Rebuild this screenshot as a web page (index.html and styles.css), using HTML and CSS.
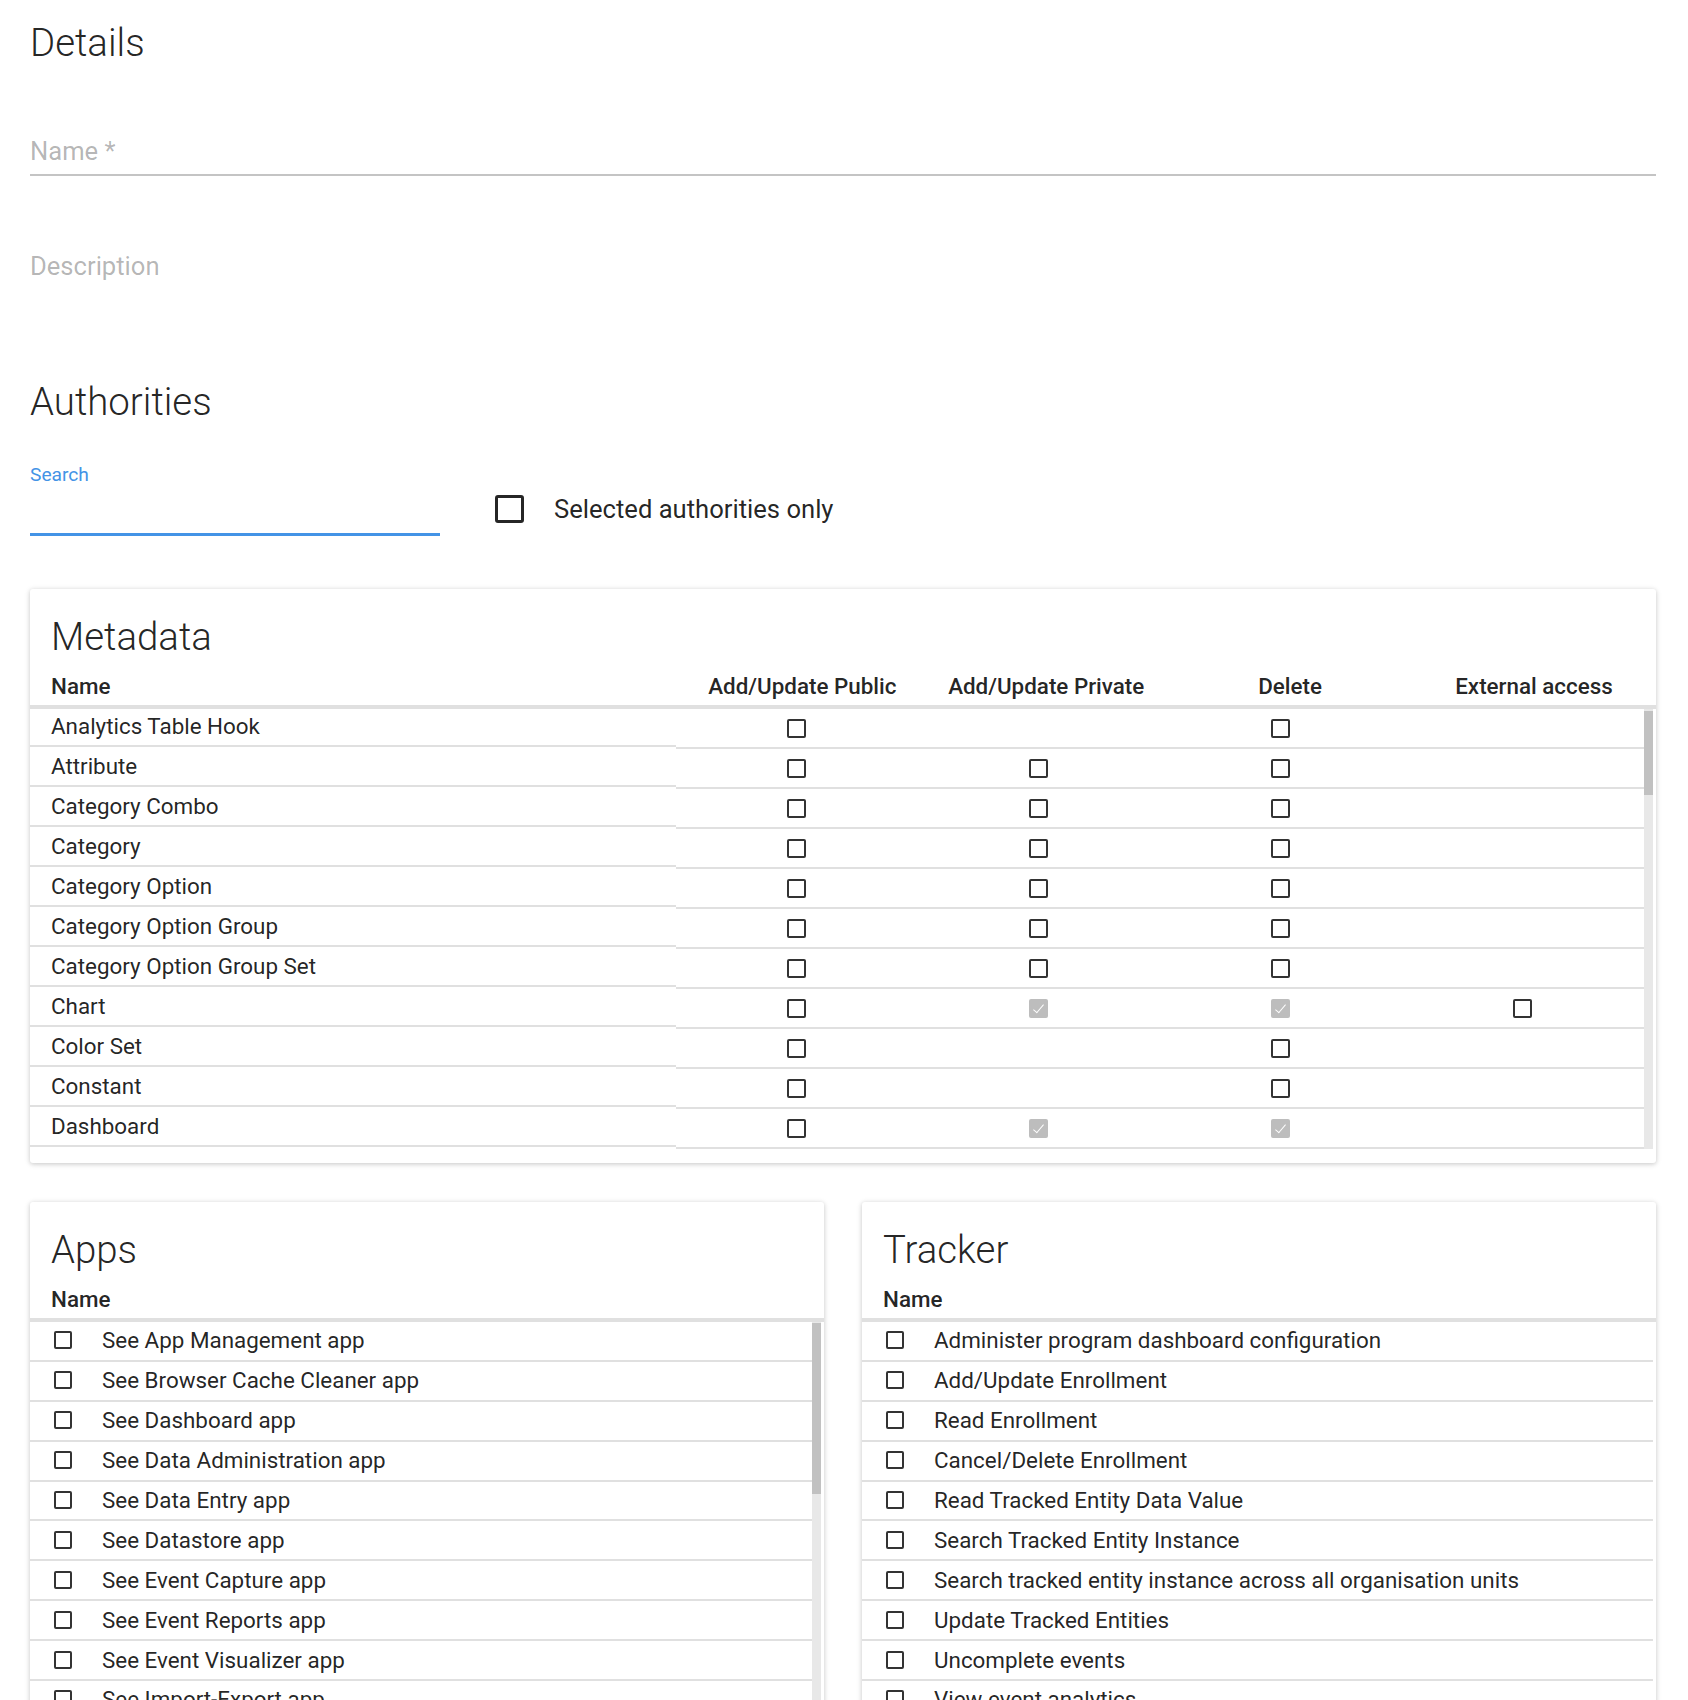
FILE: index.html
```html
<!DOCTYPE html>
<html lang="en">
<head>
<meta charset="utf-8">
<title>User role</title>
<link rel="stylesheet" href="styles.css">
</head>
<body>
<div class="page">
  <h1 class="section-title">Details</h1>
  <div class="field field-name">Name *</div>
  <div class="field field-desc">Description</div>

  <h1 class="section-title auth-title">Authorities</h1>
  <div class="search-row">
    <div class="search-field"><div class="search-label">Search</div></div>
    <label class="sel-only"><span class="big-cb"></span><span class="sel-label">Selected authorities only</span></label>
  </div>

  <section class="card card-meta">
    <h2 class="card-title">Metadata</h2>
    <div class="thead">
      <div class="c-name">Name</div>
      <div class="c-col">Add/Update Public</div>
      <div class="c-col">Add/Update Private</div>
      <div class="c-col">Delete</div>
      <div class="c-col">External access</div>
    </div>
    <div class="scroll-wrap">
      <div class="tbody">
        <div class="trow"><div class="c-name">Analytics Table Hook</div><div class="c-col"><span class="cb"></span></div><div class="c-col"></div><div class="c-col"><span class="cb"></span></div><div class="c-col"></div></div>
        <div class="trow"><div class="c-name">Attribute</div><div class="c-col"><span class="cb"></span></div><div class="c-col"><span class="cb"></span></div><div class="c-col"><span class="cb"></span></div><div class="c-col"></div></div>
        <div class="trow"><div class="c-name">Category Combo</div><div class="c-col"><span class="cb"></span></div><div class="c-col"><span class="cb"></span></div><div class="c-col"><span class="cb"></span></div><div class="c-col"></div></div>
        <div class="trow"><div class="c-name">Category</div><div class="c-col"><span class="cb"></span></div><div class="c-col"><span class="cb"></span></div><div class="c-col"><span class="cb"></span></div><div class="c-col"></div></div>
        <div class="trow"><div class="c-name">Category Option</div><div class="c-col"><span class="cb"></span></div><div class="c-col"><span class="cb"></span></div><div class="c-col"><span class="cb"></span></div><div class="c-col"></div></div>
        <div class="trow"><div class="c-name">Category Option Group</div><div class="c-col"><span class="cb"></span></div><div class="c-col"><span class="cb"></span></div><div class="c-col"><span class="cb"></span></div><div class="c-col"></div></div>
        <div class="trow"><div class="c-name">Category Option Group Set</div><div class="c-col"><span class="cb"></span></div><div class="c-col"><span class="cb"></span></div><div class="c-col"><span class="cb"></span></div><div class="c-col"></div></div>
        <div class="trow"><div class="c-name">Chart</div><div class="c-col"><span class="cb"></span></div><div class="c-col"><span class="cb cb-dis"></span></div><div class="c-col"><span class="cb cb-dis"></span></div><div class="c-col"><span class="cb"></span></div></div>
        <div class="trow"><div class="c-name">Color Set</div><div class="c-col"><span class="cb"></span></div><div class="c-col"></div><div class="c-col"><span class="cb"></span></div><div class="c-col"></div></div>
        <div class="trow"><div class="c-name">Constant</div><div class="c-col"><span class="cb"></span></div><div class="c-col"></div><div class="c-col"><span class="cb"></span></div><div class="c-col"></div></div>
        <div class="trow"><div class="c-name">Dashboard</div><div class="c-col"><span class="cb"></span></div><div class="c-col"><span class="cb cb-dis"></span></div><div class="c-col"><span class="cb cb-dis"></span></div><div class="c-col"></div></div>
      </div>
      <div class="vscroll" aria-hidden="true"><div class="vthumb vthumb-meta"></div></div>
    </div>
  </section>

  <div class="cards-row">
    <section class="card">
      <h2 class="card-title">Apps</h2>
      <div class="thead"><div class="c-name">Name</div></div>
      <div class="scroll-wrap">
        <div class="list">
          <div class="lrow"><span class="cb cb-sm"></span>See App Management app</div>
          <div class="lrow"><span class="cb cb-sm"></span>See Browser Cache Cleaner app</div>
          <div class="lrow"><span class="cb cb-sm"></span>See Dashboard app</div>
          <div class="lrow"><span class="cb cb-sm"></span>See Data Administration app</div>
          <div class="lrow"><span class="cb cb-sm"></span>See Data Entry app</div>
          <div class="lrow"><span class="cb cb-sm"></span>See Datastore app</div>
          <div class="lrow"><span class="cb cb-sm"></span>See Event Capture app</div>
          <div class="lrow"><span class="cb cb-sm"></span>See Event Reports app</div>
          <div class="lrow"><span class="cb cb-sm"></span>See Event Visualizer app</div>
          <div class="lrow"><span class="cb cb-sm"></span>See Import-Export app</div>
        </div>
        <div class="vscroll" aria-hidden="true"><div class="vthumb vthumb-apps"></div></div>
      </div>
    </section>
    <section class="card">
      <h2 class="card-title">Tracker</h2>
      <div class="thead"><div class="c-name">Name</div></div>
      <div class="scroll-wrap">
        <div class="list">
          <div class="lrow"><span class="cb cb-sm"></span>Administer program dashboard configuration</div>
          <div class="lrow"><span class="cb cb-sm"></span>Add/Update Enrollment</div>
          <div class="lrow"><span class="cb cb-sm"></span>Read Enrollment</div>
          <div class="lrow"><span class="cb cb-sm"></span>Cancel/Delete Enrollment</div>
          <div class="lrow"><span class="cb cb-sm"></span>Read Tracked Entity Data Value</div>
          <div class="lrow"><span class="cb cb-sm"></span>Search Tracked Entity Instance</div>
          <div class="lrow"><span class="cb cb-sm"></span>Search tracked entity instance across all organisation units</div>
          <div class="lrow"><span class="cb cb-sm"></span>Update Tracked Entities</div>
          <div class="lrow"><span class="cb cb-sm"></span>Uncomplete events</div>
          <div class="lrow"><span class="cb cb-sm"></span>View event analytics</div>
        </div>
      </div>
    </section>
  </div>
</div>
</body>
</html>
```
FILE: styles.css
```css
html, body {
  margin: 0;
  overflow: hidden;
}
body {
  font-family: Roboto, "Noto Sans", "Liberation Sans", sans-serif;
  color: rgba(0, 0, 0, 0.87);
  background: #fff;
}
.page {
  padding: 20px 32px 0 30px;
}
.section-title {
  margin: 0;
  font-size: 38.4px;
  font-weight: 300;
  line-height: 46px;
}
.field {
  font-size: 25.6px;
  line-height: 30px;
  color: rgba(0, 0, 0, 0.3);
}
.field-name {
  margin-top: 70px;
  padding-bottom: 8px;
  border-bottom: 2px solid #c4c4c4;
}
.field-desc {
  margin-top: 75px;
}
.auth-title {
  margin-top: 98px;
}
.search-row {
  display: flex;
  align-items: flex-start;
  margin-top: 39px;
}
.search-field {
  width: 410px;
  height: 69px;
  border-bottom: 3px solid #4393e6;
}
.search-label {
  font-size: 19.2px;
  line-height: 22px;
  color: #4393e6;
}
.sel-only {
  display: flex;
  align-items: center;
  margin-left: 55px;
  margin-top: 30px;
  height: 30px;
}
.big-cb {
  width: 29px;
  height: 28px;
  box-sizing: border-box;
  border: 3px solid #262626;
  border-radius: 3px;
}
.sel-label {
  margin-left: 30px;
  font-size: 25.6px;
  line-height: 30px;
}
.card {
  background: #fff;
  border-radius: 3px;
  box-shadow: 0 1px 6px rgba(0, 0, 0, 0.12), 0 1px 4px rgba(0, 0, 0, 0.12);
}
.card-meta {
  margin-top: 53px;
  padding-bottom: 14px;
}
.card-title {
  margin: 0;
  padding: 25px 21px 0;
  font-size: 38.4px;
  font-weight: 300;
  line-height: 45px;
}
.thead {
  display: flex;
  padding: 14px 0 6px;
  border-bottom: 4px solid #e0e0e0;
  font-size: 22.4px;
  font-weight: 500;
  line-height: 26px;
}
.c-name {
  width: 40%;
  box-sizing: border-box;
  padding-left: 21px;
}
.c-col {
  width: 15%;
  text-align: center;
}
.scroll-wrap {
  display: flex;
  height: 440px;
  margin-right: 3px;
}
.tbody,
.list {
  flex: 1;
  min-width: 0;
  overflow: hidden;
}
.trow {
  display: flex;
  align-items: flex-start;
  font-size: 22.4px;
}
.trow .c-name {
  height: 38px;
  padding-bottom: 2px;
  display: flex;
  align-items: center;
  border-bottom: 2px solid #e0e0e0;
}
.trow .c-col {
  height: 40px;
  box-sizing: border-box;
  display: flex;
  align-items: center;
  justify-content: center;
  border-bottom: 2px solid #e0e0e0;
}
.cb {
  display: inline-block;
  position: relative;
  width: 19px;
  height: 19px;
  box-sizing: border-box;
  border: 2px solid #333;
  border-radius: 2px;
  flex: none;
}
.cb-dis {
  background: #bdbdbd;
  border-color: #bdbdbd;
}
.cb-dis::after {
  content: "";
  position: absolute;
  left: 5px;
  top: 1px;
  width: 4px;
  height: 10px;
  border: solid #fff;
  border-width: 0 1.5px 1.5px 0;
  transform: rotate(40deg);
}
.vscroll {
  width: 9px;
  flex: none;
  background: #e8e8e8;
}
.vthumb {
  background: #c1c1c1;
}
.vthumb-meta {
  margin-top: 2px;
  height: 84px;
}
.vthumb-apps {
  margin-top: 1px;
  height: 171px;
}
.cards-row {
  display: grid;
  grid-template-columns: 1fr 1fr;
  column-gap: 38px;
  margin-top: 39px;
  align-items: start;
}
.lrow {
  display: flex;
  align-items: center;
  height: 39.9px;
  box-sizing: border-box;
  padding-left: 24px;
  padding-bottom: 1px;
  border-bottom: 2px solid #e0e0e0;
  font-size: 22.4px;
  white-space: nowrap;
}
.cb-sm {
  width: 18px;
  height: 18px;
  margin-right: 30px;
}
```
